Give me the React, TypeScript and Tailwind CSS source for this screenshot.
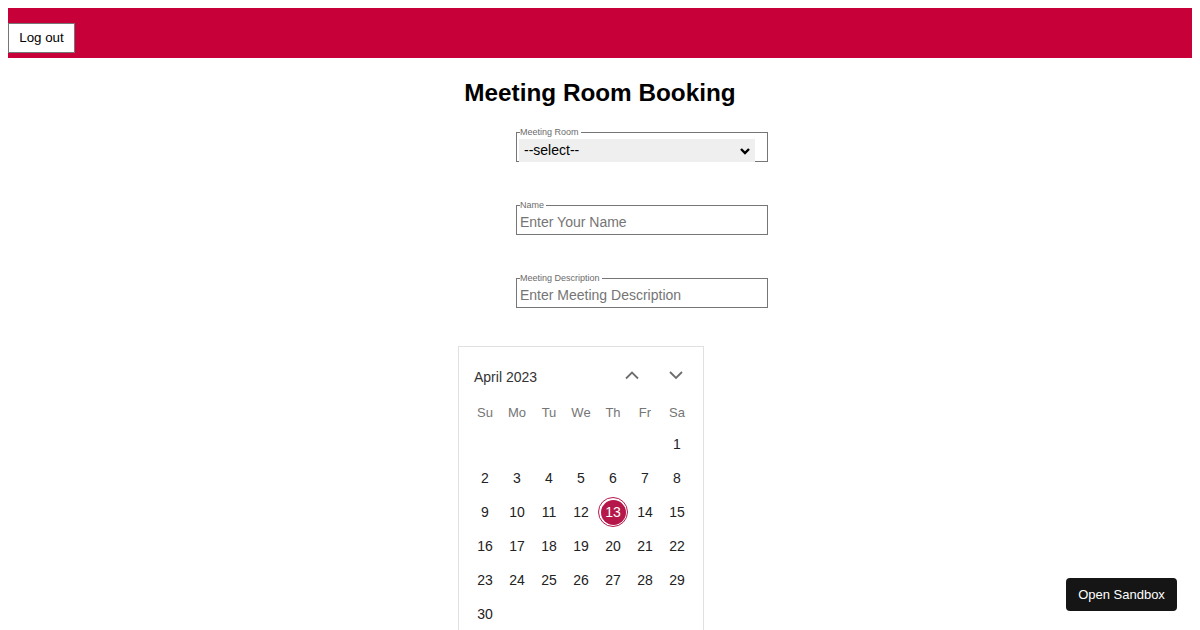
const weekDays = ['Su', 'Mo', 'Tu', 'We', 'Th', 'Fr', 'Sa'];

// April 2023 starts on a Saturday
const cells: (number | null)[] = [...Array(6).fill(null), ...Array.from({ length: 30 }, (_, i) => i + 1)];

function Field({ label, placeholder }: { label: string; placeholder: string }) {
  return (
    <fieldset className="w-[252px] h-[35px] border border-[#767676] px-[3px]">
      <legend className="text-[9px] leading-[10px] text-[#6b6b6b] pr-[2px]">{label}</legend>
      <input
        className="w-full h-[20px] mt-[1px] text-[14px] leading-[20px] outline-none placeholder:text-[#757575] bg-transparent"
        placeholder={placeholder}
      />
    </fieldset>
  );
}

function Chevron({ up }: { up?: boolean }) {
  return (
    <svg width="16" height="10" viewBox="0 0 16 10" fill="none" stroke="#6e6e6e" strokeWidth="1.8">
      {up ? <path d="M2 8.5 L8 2.5 L14 8.5" /> : <path d="M2 2 L8 8 L14 2" />}
    </svg>
  );
}

function Calendar() {
  return (
    <div className="w-[246px] h-[300px] border border-[#e0e0e0] pl-[10px] pr-[10px]">
      <div className="flex items-center h-[59px] pt-[2px]">
        <span className="pl-[5px] text-[14px] text-[#333]">April 2023</span>
        <div className="ml-auto flex items-center gap-[28px] pr-[9px] pb-[6px]">
          <Chevron up />
          <Chevron />
        </div>
      </div>
      <div className="grid grid-cols-[repeat(7,32px)] -mt-[2px]">
        {weekDays.map((d) => (
          <div key={d} className="h-[18px] flex items-center justify-center text-[13px] text-[#757575]">
            {d}
          </div>
        ))}
      </div>
      <div className="grid grid-cols-[repeat(7,32px)] mt-[5px]">
        {cells.map((d, i) => (
          <div key={i} className="h-[34px] flex items-center justify-center text-[14px] text-[#222]">
            {d === 13 ? (
              <div className="w-[30px] h-[30px] rounded-full border-[1.5px] border-[#b5174b] p-[1.5px]">
                <div className="w-full h-full rounded-full bg-[#b5174b] text-white flex items-center justify-center">
                  13
                </div>
              </div>
            ) : (
              d
            )}
          </div>
        ))}
      </div>
    </div>
  );
}

export default function App() {
  return (
    <div className="p-2 h-[630px] overflow-hidden bg-white" style={{ fontFamily: '"Liberation Sans", Arial, sans-serif' }}>
      <header className="h-[50px] bg-[#c8003a] pt-[15px]">
        <button className="h-[30px] w-[67px] bg-white border border-[#767676] text-[13.33px] text-black">
          Log out
        </button>
      </header>
      <h1 className="mt-[21px] text-center text-[24.3px] leading-[28px] font-bold text-black">
        Meeting Room Booking
      </h1>
      <div className="pl-[508px] mt-[20px] flex flex-col gap-[38px]">
        <fieldset className="w-[252px] h-[35px] border border-[#767676] pl-[2px] pr-[12px]">
          <legend className="text-[9px] leading-[10px] text-[#6b6b6b] ml-[1px] pr-[2px]">Meeting Room</legend>
          <div className="h-[23px] mt-[2px] bg-[#efefef] flex items-center pl-[5px] pr-[4px] text-[14px] text-black">
            <span>--select--</span>
            <svg className="ml-auto" width="12" height="8" viewBox="0 0 12 8" fill="none" stroke="#000" strokeWidth="2.4">
              <path d="M2 2 L6 6 L10 2" />
            </svg>
          </div>
        </fieldset>
        <Field label="Name" placeholder="Enter Your Name" />
        <Field label="Meeting Description" placeholder="Enter Meeting Description" />
      </div>
      <div className="pl-[450px] mt-[38px]">
        <Calendar />
      </div>
      <button className="fixed right-[23px] bottom-[19px] h-[33px] w-[111px] rounded-[4px] bg-[#151515] text-white text-[13px]">
        Open Sandbox
      </button>
    </div>
  );
}
